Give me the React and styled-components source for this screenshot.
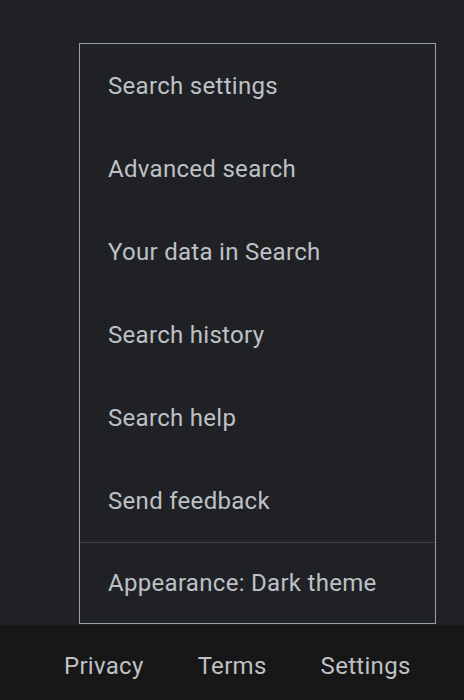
import React from 'react';
import styled, { createGlobalStyle } from 'styled-components';

const GlobalStyle = createGlobalStyle`
  html, body {
    margin: 0;
    padding: 0;
    background: #202124;
  }
  body {
    font-family: Roboto, 'Liberation Sans', Arial, sans-serif;
  }
`;

const Page = styled.div`
  width: 464px;
  height: 700px;
  display: flex;
  flex-direction: column;
  background: #202124;
  overflow: hidden;
`;

const Main = styled.div`
  flex: 1;
  padding: 43px 0 0 79px;
`;

const Menu = styled.ul`
  list-style: none;
  margin: 0;
  padding: 0;
  width: 355px;
  border: 1px solid #9aa0a6;
  background: #202124;
  display: flex;
  flex-direction: column;
`;

const MenuItem = styled.li`
  height: ${(p) => (p.last ? '81px' : '83px')};
  display: flex;
  align-items: center;
  padding-left: 28px;
  font-size: 24px;
  letter-spacing: 0.3px;
  color: #bdc1c6;
  border-top: ${(p) => (p.divided ? '1px solid #3c4043' : 'none')};
  box-sizing: border-box;
`;

const Footer = styled.footer`
  height: 75px;
  flex-shrink: 0;
  background: #171717;
  display: flex;
  align-items: center;
  padding-left: 64px;
  gap: 54px;
`;

const FooterLink = styled.a`
  font-size: 24px;
  letter-spacing: 0.3px;
  color: #bdc1c6;
  text-decoration: none;
  margin-top: 6px;
`;

const items = [
  'Search settings',
  'Advanced search',
  'Your data in Search',
  'Search history',
  'Search help',
  'Send feedback',
];

export default function App() {
  return (
    <>
      <GlobalStyle />
      <Page>
        <Main>
          <Menu>
            {items.map((label) => (
              <MenuItem key={label}>{label}</MenuItem>
            ))}
            <MenuItem divided last>Appearance: Dark theme</MenuItem>
          </Menu>
        </Main>
        <Footer>
          <FooterLink>Privacy</FooterLink>
          <FooterLink>Terms</FooterLink>
          <FooterLink>Settings</FooterLink>
        </Footer>
      </Page>
    </>
  );
}
